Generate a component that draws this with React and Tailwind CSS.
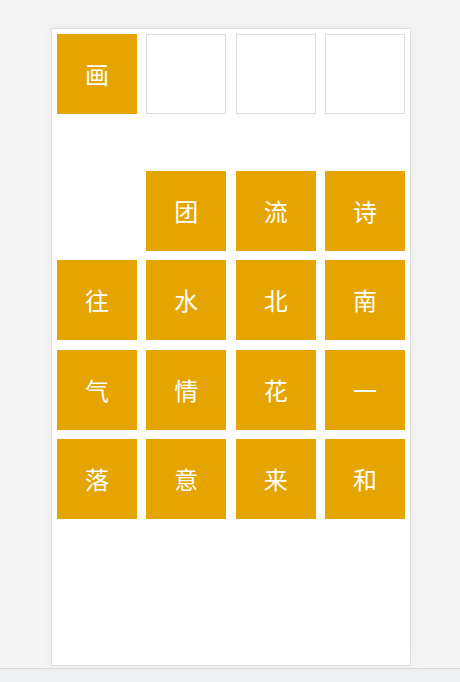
const topRow = ["画", null, null, null];

const gridChars = [
	null, "团", "流", "诗",
	"往", "水", "北", "南",
	"气", "情", "花", "一",
	"落", "意", "来", "和",
];

const Tile = ({ ch }) => {
	if (!ch) {
		return <div className="h-[80px] bg-white border border-[#dcdcdc]" />;
	}
	return (
		<div className="h-[80px] bg-[#e6a400] flex items-center justify-center text-white text-[24px] leading-none">
			{ch}
		</div>
	);
};

export default function App() {
	return (
		<div
			className="w-[460px] h-[682px] bg-[#f4f4f4] flex flex-col"
			style={{ fontFamily: '"Noto Sans CJK SC", "Noto Sans", sans-serif' }}
		>
			<div className="flex-1 pt-[28px] pl-[51px] pb-[2px]">
				<div className="w-[360px] h-[638px] bg-white border border-[#dedede] shadow-[0_0_12px_rgba(0,0,0,0.04)] p-[5px]">
					<div className="grid grid-cols-4 gap-[9.33px]">
						{topRow.map((ch, i) => (
							<Tile key={`t-${i}`} ch={ch} />
						))}
					</div>
					<div className="grid grid-cols-4 gap-[9.33px] mt-[57px]">
						{gridChars.map((ch, i) =>
							ch ? <Tile key={`g-${i}`} ch={ch} /> : <div key={`g-${i}`} />
						)}
					</div>
				</div>
			</div>
			<div className="h-[14px] bg-[#eeeff1] border-t border-[#d8d8d8]" />
		</div>
	);
}
